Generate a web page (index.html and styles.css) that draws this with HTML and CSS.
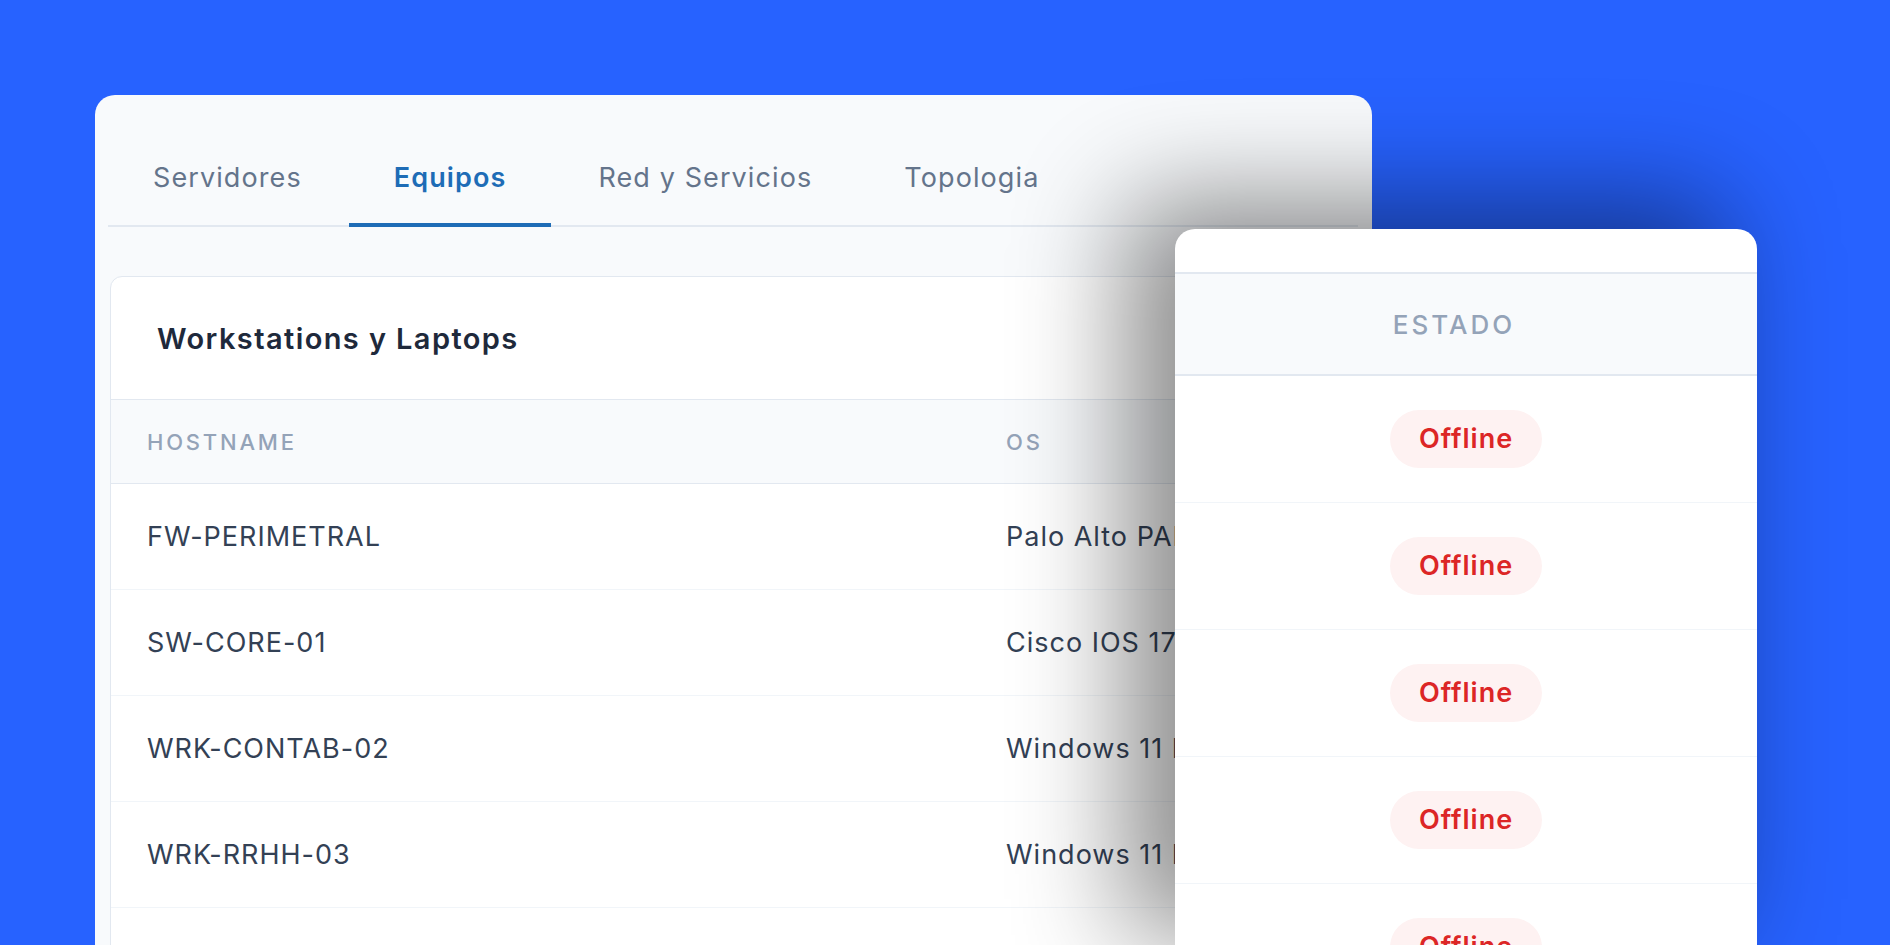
FILE: index.html
```html
<!DOCTYPE html>
<html lang="es">
<head>
    <meta charset="UTF-8">
    <meta name="viewport" content="width=device-width, initial-scale=1.0">
    <title>Inventario - Equipos</title>
    <link rel="stylesheet" href="styles.css">
</head>
<body>
    <div class="stage">
        <div class="panel panel-back">
            <div class="tabs">
                <div class="tab">Servidores</div>
                <div class="tab active">Equipos</div>
                <div class="tab">Red y Servicios</div>
                <div class="tab">Topologia</div>
            </div>
            <div class="card">
                <div class="card-title">Workstations y Laptops</div>
                <table class="grid">
                    <thead>
                        <tr>
                            <th class="col-host">Hostname</th>
                            <th class="col-os">OS</th>
                        </tr>
                    </thead>
                    <tbody>
                        <tr><td>FW-PERIMETRAL</td><td>Palo Alto PAN-OS 11.1</td></tr>
                        <tr><td>SW-CORE-01</td><td>Cisco IOS 17.9</td></tr>
                        <tr><td>WRK-CONTAB-02</td><td>Windows 11 Pro</td></tr>
                        <tr><td>WRK-RRHH-03</td><td>Windows 11 Pro</td></tr>
                        <tr><td></td><td></td></tr>
                    </tbody>
                </table>
            </div>
        </div>

        <div class="panel panel-front">
            <div class="front-top"></div>
            <div class="front-head">Estado</div>
            <div class="front-row"><span class="pill">Offline</span></div>
            <div class="front-row"><span class="pill">Offline</span></div>
            <div class="front-row"><span class="pill">Offline</span></div>
            <div class="front-row"><span class="pill">Offline</span></div>
            <div class="front-row"><span class="pill">Offline</span></div>
        </div>
    </div>
</body>
</html>
```

FILE: styles.css
```css
html, body {
    margin: 0;
    padding: 0;
}
body {
    font-family: Inter, "Noto Sans", sans-serif;
    background-color: #2762ff;
    width: 1890px;
    height: 945px;
    overflow: hidden;
}
.stage {
    position: relative;
    width: 1890px;
    height: 945px;
    overflow: hidden;
}
.panel {
    position: absolute;
    border-radius: 20px;
    overflow: hidden;
}
.panel-back {
    left: 95px;
    top: 95px;
    width: 1277px;
    height: 850px;
    border-radius: 20px 20px 0 0;
    background-color: #f8fafc;
    padding: 0 14px;
    box-sizing: border-box;
}
.tabs {
    display: flex;
    padding-top: 66px;
    border-bottom: 2px solid #e2e8f0;
    margin-left: -1px;
}
.tab {
    font-size: 27px;
    letter-spacing: 1.1px;
    line-height: 34px;
    color: #64748b;
    padding: 0 45px 28px;
    border-bottom: 4px solid transparent;
    margin-bottom: -2px;
    white-space: nowrap;
}
.tab + .tab {
    margin-left: 2px;
}
.tab.active {
    color: #1e6cb6;
    font-weight: 600;
    border-bottom-color: #1e6cb6;
}
.card {
    margin-top: 49px;
    margin-left: 1px;
    background-color: #fff;
    border: 1px solid #e2e8f0;
    border-radius: 12px;
    width: 1500px;
}
.card-title {
    height: 122px;
    display: flex;
    align-items: center;
    padding-left: 46px;
    font-size: 29px;
    letter-spacing: 1.4px;
    font-weight: 600;
    color: #1e293b;
    border-bottom: 1px solid #e2e8f0;
}
.grid {
    border-collapse: collapse;
    width: 100%;
    table-layout: fixed;
}
.grid th {
    height: 83px;
    background-color: #f8fafc;
    text-align: left;
    font-size: 22px;
    font-weight: 500;
    letter-spacing: 2.8px;
    text-transform: uppercase;
    color: #94a3b8;
    border-bottom: 1px solid #e2e8f0;
    padding: 0 0 0 36px;
}
.grid .col-host {
    width: 823px;
}
.grid td {
    height: 105px;
    font-size: 27px;
    letter-spacing: 1px;
    color: #334155;
    padding: 0 0 0 36px;
    border-bottom: 1px solid #f1f5f9;
    white-space: nowrap;
}
.panel-front {
    left: 1175px;
    top: 229px;
    width: 582px;
    height: 716px;
    border-radius: 20px 20px 0 0;
    background-color: #fff;
    box-shadow: -40px -20px 110px 10px rgba(0, 0, 0, 0.45);
}
.front-top {
    height: 43px;
    border-bottom: 2px solid #e2e8f0;
}
.front-head {
    height: 100px;
    display: flex;
    align-items: center;
    justify-content: center;
    padding-right: 24px;
    background-color: #f8fafc;
    border-bottom: 2px solid #e2e8f0;
    font-size: 26px;
    font-weight: 500;
    letter-spacing: 3px;
    text-transform: uppercase;
    color: #94a3b8;
}
.front-row {
    height: 126px;
    display: flex;
    align-items: center;
    justify-content: center;
    border-bottom: 1px solid #f1f5f9;
}
.pill {
    display: inline-block;
    padding: 0 29px;
    height: 58px;
    line-height: 58px;
    border-radius: 29px;
    background-color: #fef2f2;
    color: #dc2626;
    font-size: 27px;
    letter-spacing: 1px;
    font-weight: 600;
}
```
